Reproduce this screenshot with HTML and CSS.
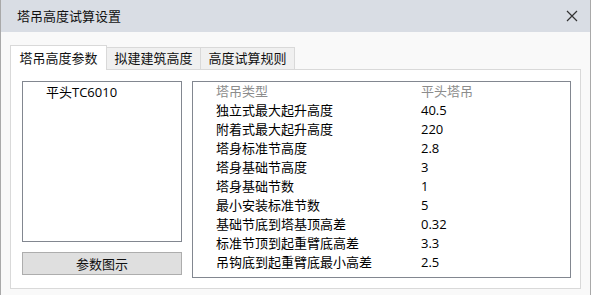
FILE: index.html
```
<!DOCTYPE html>
<html lang="zh-CN">
<head>
    <meta charset="UTF-8">
    <meta name="viewport" content="width=device-width, initial-scale=1.0">
    <title>塔吊高度试算设置</title>
    <link rel="stylesheet" href="styles.css">
</head>
<body>
    <div class="window">
        <div class="titlebar">
            <span class="title">塔吊高度试算设置</span>
            <svg class="close" width="12" height="12" viewBox="0 0 12 12">
                <path d="M1 1 L11 11 M11 1 L1 11" stroke="#333" stroke-width="1.2" fill="none"/>
            </svg>
        </div>
        <div class="content">
            <div class="tabs">
                <div class="tab active">塔吊高度参数</div>
                <div class="tab">拟建建筑高度</div>
                <div class="tab">高度试算规则</div>
            </div>
            <div class="panel">
                <div class="left">
                    <div class="list">
                        <div class="list-item">平头TC6010</div>
                    </div>
                    <button class="btn">参数图示</button>
                </div>
                <div class="grid">
                    <div class="row head"><span class="label">塔吊类型</span><span class="value">平头塔吊</span></div>
                    <div class="row"><span class="label">独立式最大起升高度</span><span class="value">40.5</span></div>
                    <div class="row"><span class="label">附着式最大起升高度</span><span class="value">220</span></div>
                    <div class="row"><span class="label">塔身标准节高度</span><span class="value">2.8</span></div>
                    <div class="row"><span class="label">塔身基础节高度</span><span class="value">3</span></div>
                    <div class="row"><span class="label">塔身基础节数</span><span class="value">1</span></div>
                    <div class="row"><span class="label">最小安装标准节数</span><span class="value">5</span></div>
                    <div class="row"><span class="label">基础节底到塔基顶高差</span><span class="value">0.32</span></div>
                    <div class="row"><span class="label">标准节顶到起重臂底高差</span><span class="value">3.3</span></div>
                    <div class="row"><span class="label">吊钩底到起重臂底最小高差</span><span class="value">2.5</span></div>
                </div>
            </div>
        </div>
    </div>
</body>
</html>
```

FILE: styles.css
```
body {
    margin: 0;
    font-family: "Open Sans", "Noto Sans CJK SC", sans-serif;
    font-size: 13px;
    color: #000;
    background-color: #f9f9f9;
}
.window {
    width: 591px;
    height: 295px;
    box-sizing: border-box;
    border-left: 1px solid #a9a9a9;
    border-right: 1px solid #a9a9a9;
    background-color: #f9f9f9;
}
.titlebar {
    height: 32px;
    background-color: #d9dde4;
    display: flex;
    align-items: center;
    justify-content: space-between;
    padding: 0 12px 0 16px;
}
.title {
    font-size: 13px;
    line-height: 16px;
    color: #111;
}
.content {
    padding: 13px 8px 0 9px;
}
.tabs {
    display: flex;
    align-items: flex-end;
    height: 24px;
}
.tab {
    width: 94px;
    height: 22px;
    box-sizing: border-box;
    border: 1px solid #d9d9d9;
    border-bottom: none;
    border-left: none;
    background-color: #f0f0f0;
    text-align: center;
    line-height: 21px;
    color: #111;
}
.tab.active {
    width: 97px;
    height: 25px;
    border-left: 1px solid #d9d9d9;
    background-color: #fff;
    line-height: 24px;
    margin-bottom: -1px;
    position: relative;
    z-index: 1;
}
.panel {
    width: 571px;
    height: 220px;
    box-sizing: border-box;
    background-color: #fff;
    border: 1px solid #d9d9d9;
    display: flex;
    gap: 10px;
    padding: 11px 0 0 11px;
}
.left {
    width: 160px;
}
.list {
    height: 161px;
    box-sizing: border-box;
    border: 1px solid #828790;
    padding: 2px 0 0 23px;
}
.list-item {
    line-height: 16px;
}
.btn {
    display: block;
    width: 160px;
    height: 23px;
    margin-top: 10px;
    background-color: #dfdfdf;
    border: 1px solid #adadad;
    font-family: inherit;
    font-size: 13px;
    color: #111;
    padding: 0;
}
.grid {
    width: 379px;
    height: 197px;
    box-sizing: border-box;
    border: 1px solid #828790;
}
.row {
    display: flex;
    height: 19px;
    line-height: 19px;
    padding-left: 23px;
}
.label {
    width: 205px;
}
.head {
    color: #8c8c8c;
}
```
